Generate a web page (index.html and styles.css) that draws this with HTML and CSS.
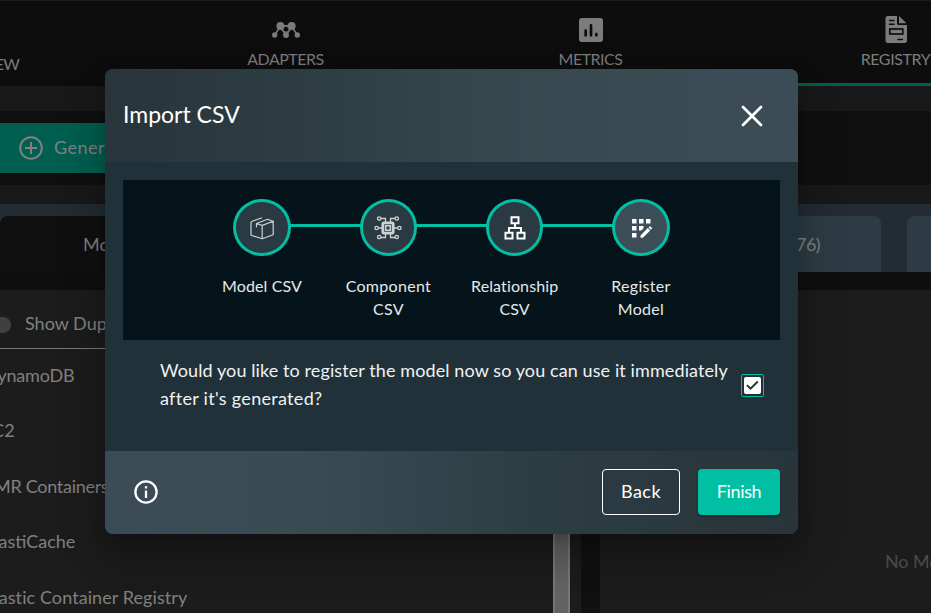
FILE: index.html
```html
<!DOCTYPE html>
<html lang="en">
<head>
<meta charset="utf-8">
<title>Import CSV</title>
<link rel="stylesheet" href="styles.css">
</head>
<body>
<div class="page">
  <nav class="nav">
    <div class="nav-tab nav-tab-first"><span>OVERVIEW</span></div>
    <div class="nav-tab">
      <svg width="28" height="28" viewBox="0 0 28 28"><g fill="currentColor"><circle cx="8.4" cy="10" r="4"/><circle cx="19.6" cy="10" r="4"/><circle cx="2.7" cy="19" r="2.7"/><circle cx="14" cy="19" r="3"/><circle cx="25.3" cy="19" r="2.7"/></g><path d="M2.7 19 8 11M25.3 19 20 11M8 11l6 8 6-8M8 9.8h12" fill="none" stroke="currentColor" stroke-width="1.5"/><circle cx="14" cy="13.2" r="2.8" fill="#0d0d0d" stroke="currentColor" stroke-width=".8"/></svg>
      <span>ADAPTERS</span>
    </div>
    <div class="nav-tab">
      <svg width="32" height="32" viewBox="0 0 24 24"><path fill="currentColor" fill-rule="evenodd" d="M5 3h14a2 2 0 0 1 2 2v14a2 2 0 0 1-2 2H5a2 2 0 0 1-2-2V5c0-1.100.9-2 2-2ZM8 11.500a1 1 0 0 0-1 1V16a1 1 0 0 0 2 0v-3.500a1 1 0 0 0-1-1ZM12 7.500a1 1 0 0 0-1 1V16a1 1 0 0 0 2 0V8.500a1 1 0 0 0-1-1ZM16 14a1 1 0 0 0-1 1v1a1 1 0 0 0 2 0v-1a1 1 0 0 0-1-1Z"/></svg>
      <span>METRICS</span>
    </div>
    <div class="nav-tab nav-tab-active">
      <svg width="22" height="28" viewBox="0 0 22 28"><path fill="currentColor" d="M3 0h9v7.500a1.500 1.500 0 0 0 1.500 1.500H22v15.500a2.500 2.500 0 0 1-2.500 2.500H3A2.500 2.500 0 0 1 .5 24.500v-22A2.500 2.500 0 0 1 3 0ZM14 0l7.500 7.200H14Z"/><path d="M4.500 4.500H9M4.500 8.200H9M13 23.500h4.500" stroke="#0d0d0d" stroke-width="1.500" stroke-linecap="round"/><rect x="4.800" y="13" width="13" height="5" fill="none" stroke="#0d0d0d" stroke-width="1.700"/></svg>
      <span>REGISTRY</span>
    </div>
  </nav>
  <div class="toolbar">
    <button class="generate"><svg width="24" height="24" viewBox="0 0 24 24" fill="none" stroke="currentColor" stroke-width="2"><circle cx="12" cy="12" r="10.800"/><path d="M12 6v12M6 12h12"/></svg><span>Generate</span></button>
  </div>
  <div class="tabs">
    <div class="tab tab-selected">Models</div>
    <div class="tab tab-filled">(76)</div>
    <div class="tab tab-last"></div>
  </div>
  <div class="content">
    <div class="list">
      <div class="toggle-row"><span class="toggle"></span><span class="toggle-label">Show Duplicates</span></div>
      <div class="row dynamo">DynamoDB</div>
      <div class="row ec2">EC2</div>
      <div class="row emr">EMR Containers</div>
      <div class="row">ElastiCache</div>
      <div class="row registry">Elastic Container Registry</div>
    </div>
    <div class="scroll"></div>
    <div class="gap"></div>
    <div class="details">No Model selected</div>
  </div>
</div>

<div class="overlay">
  <section class="modal">
    <header class="modal-head">
      <h1>Import CSV</h1>
      <svg width="24" height="24" viewBox="0 0 24 24" fill="none" stroke="#fff" stroke-width="2.700" stroke-linecap="round"><path d="m3 3 18 18M21 3 3 21"/></svg>
    </header>
    <div class="modal-body">
      <ol class="steps">
        <li>
          <span class="circle"><svg width="26" height="26" viewBox="0 0 26 26" fill="none" stroke="#ccd1d3" stroke-width="1.200" stroke-linejoin="round"><path d="M2 6.800v13.400l11.200 3.600 11-4V6.200l-11 4.200v13.400M2 6.800l11-4M13.200 10.400 7.500 8.500v3.800M7.500 8.500l11-4.200 5.700 1.900"/></svg></span>
          <span class="label">Model CSV</span>
        </li>
        <li>
          <span class="circle"><svg width="28" height="26" viewBox="0 0 28 26" fill="none" stroke="#ccd1d3" stroke-width="1.300"><rect x="8.800" y="7.800" width="10.400" height="10.400" rx="1" stroke-width="2.800"/><rect x="11.700" y="10.700" width="4.600" height="4.600" stroke-width="1.600"/><path d="M11.500 7V3.500H7M16.500 7V3.500H21M11.500 19v3.500H7M16.500 19v3.500H21M8 13H4.300M20 13h3.700"/><circle cx="5.200" cy="3.500" r="1.700"/><circle cx="22.800" cy="3.500" r="1.700"/><circle cx="5.200" cy="22" r="1.700"/><circle cx="22.800" cy="22" r="1.700"/><circle cx="2.600" cy="13" r="1.700"/><circle cx="25.400" cy="13" r="1.700"/></svg></span>
          <span class="label wide">Component<br>CSV</span>
        </li>
        <li>
          <span class="circle"><svg width="24" height="26" viewBox="0 0 24 26" fill="none" stroke="#fff" stroke-width="2"><path d="M8.500 2.300h7v6h-7zM2.500 17.700h7v5.800h-7zM14.500 17.700h7v5.800h-7zM12 8.500V13M6 17.500V13h12v4.500"/></svg></span>
          <span class="label">Relationship<br>CSV</span>
        </li>
        <li>
          <span class="circle circle-current"><svg width="24" height="24" viewBox="0 0 24 24" fill="#fff"><path d="M3 3h4.500v4.500H3zM10 3h4.500v4.500H10zM17 3h4.500v4.500H17zM3 10h4.500v4.500H3zM10 10h4.500v2.300l-2.200 2.200H10zM3 17h4.500v4.500H3zM11.500 19.400l7.300-7.300 2.400 2.400-7.300 7.300h-2.400zM19.500 11.400l1-1q.5-.5 1 0l1.300 1.300q.5.500 0 1l-1 1z"/></svg></span>
          <span class="label wide">Register<br>Model</span>
        </li>
      </ol>
      <div class="question">
        <p>Would you like to register the model now so you can use it immediately<br><span class="second">after it's generated?</span></p>
        <span class="check"><svg width="17" height="17" viewBox="0 0 17 17"><rect width="17" height="17" rx="2" fill="#fff"/><path d="m3 8.200 3.500 3.500L13.800 4.500" fill="none" stroke="#20313a" stroke-width="1.900"/></svg></span>
      </div>
    </div>
    <footer class="modal-foot">
      <svg class="info" width="24" height="24" viewBox="0 0 24 24" fill="none" stroke="#fff" stroke-width="2.300"><circle cx="12" cy="12" r="10.600"/><path d="M12 10.500V18M12 6.200v2.200"/></svg>
      <button class="btn back">Back</button>
      <button class="btn finish">Finish</button>
    </footer>
  </section>
</div>
</body>
</html>
```
FILE: styles.css
```css
* { box-sizing: border-box; }
body { margin: 0; height: 613px; overflow: hidden; background: #1c1c1c; color: #808080; font: 18px/24px "Lato", sans-serif; }
button { font: inherit; color: inherit; border: 0; }
svg { display: block; flex: none; }
.page { width: 931px; height: 613px; overflow: hidden; background: #191919; }

.nav { display: flex; height: 86px; border-top: 1px solid #1c1c1c; background: #0d0d0d; margin-left: -172px; width: 1220px; }
.nav-tab { width: 305px; padding-bottom: 15px; display: flex; flex-direction: column; align-items: center; justify-content: flex-end; font-size: 16px; letter-spacing: -.5px; color: #7c7c7c; }
.nav-tab:nth-child(2) svg { margin-bottom: 3px; }
.nav-tab:nth-child(3) svg { margin-bottom: 1px; }
.nav-tab:nth-child(4) svg { margin-bottom: 3px; }
.nav-tab-first { padding: 0 0 10px; letter-spacing: -.8px; }
.nav-tab-active { border-bottom: 3px solid #00604f; padding-bottom: 12px; letter-spacing: -.4px; }

.toolbar { height: 74px; margin-top: 25px; padding-top: 12px; background: #101010; }
.generate { display: flex; align-items: center; gap: 11px; width: 150px; height: 50px; margin: 0; padding: 0 19px; background: #005f50; letter-spacing: .5px; }
.generate span { padding-bottom: 2px; }

.tabs { display: flex; height: 68px; margin-top: 19px; padding-top: 12px; background: #222c32; }
.tab { height: 56px; line-height: 57px; }
.tab-selected { width: 300px; padding-left: 83px; background: #101010; border-radius: 8px 8px 0 0; }
.tab-filled { width: 581px; padding-right: 61px; text-align: right; background: #2d3c44; border-radius: 0 8px 0 0; letter-spacing: -.6px; }
.tab-last { flex: 1; margin-left: 26px; background: #2d3c44; border-radius: 8px 0 0 0; }

.content { display: flex; height: 341px; border-top: 18px solid #0f0f0f; background: #1c1c1c; }
.list { width: 553px; white-space: nowrap; }
.toggle-row { display: flex; align-items: center; gap: 14px; height: 59px; padding-top: 11px; border-bottom: 1px solid #777; }
.toggle { width: 31px; height: 16px; margin-left: -20px; border-radius: 8px; background: #404040; }
.toggle-label { padding-bottom: 3px; }
.row { height: 55.4px; margin-left: -16px; line-height: 53px; }
.dynamo { letter-spacing: -.2px; }
.ec2 { margin-left: -18px; }
.emr { letter-spacing: -.3px; }
.registry { letter-spacing: .08px; }
.scroll { width: 17px; border: solid #777; border-width: 0 2px; background: #626262; }
.gap { width: 19px; margin-left: 11px; background: #111; }
.details { flex: 1; padding: 259px 0 0 285px; white-space: nowrap; overflow: hidden; color: #4b4b4b; letter-spacing: -.1px; }

.overlay { position: absolute; inset: 0; padding: 69px 0 0 105px; }
.modal { width: 693px; height: 465px; border-radius: 8px; overflow: hidden; background: #20313a; color: #fff; box-shadow: 0 11px 15px -7px rgba(0,0,0,.2), 0 24px 38px 3px rgba(0,0,0,.14), 0 9px 46px 8px rgba(0,0,0,.12); }
.modal-head { display: flex; align-items: center; justify-content: space-between; height: 93px; padding: 0 34.5px 0 18px; background: linear-gradient(90deg, #28353a, #2f3f46 35%, #36474e 55%, #3c4c56 90%); }
.modal-head h1 { margin: 0; padding-bottom: 3px; font-size: 23px; line-height: 30px; font-weight: 400; }
.modal-body { height: 289px; padding: 18px; }
.steps { display: grid; grid-template-columns: repeat(4, 126.3px); justify-content: center; height: 160px; margin: 0; padding: 19px 0 0; list-style: none; background: #05141b; }
.steps li { display: flex; flex-direction: column; align-items: center; position: relative; }
.steps li + li::before { content: ""; position: absolute; top: 25px; left: -36px; width: 72px; height: 3px; background: #00bfa2; }
.circle { display: flex; align-items: center; justify-content: center; width: 57.5px; height: 57px; border: 3px solid #00bfa2; border-radius: 50%; background: #293a43; }
.circle-current { background: #3c4f58; }
.label { margin-top: 18px; font-size: 16px; line-height: 23px; letter-spacing: .12px; text-align: center; color: #e6e8e9; }
.wide { letter-spacing: .3px; }
.question { display: flex; align-items: center; gap: 13px; padding: 16px 0 0 37px; }
.question p { width: 568px; margin: 0; line-height: 28px; letter-spacing: .1px; white-space: nowrap; color: #f0f2f3; }
.second { letter-spacing: .3px; }
.check { display: flex; align-items: center; justify-content: center; width: 23px; height: 23px; margin-top: 3px; border: 1px solid #00bfa2; border-radius: 2px; }
.modal-foot { display: flex; align-items: center; height: 83px; padding: 0 18px 2px 29px; background: linear-gradient(90deg, #3c4c56, #384b53 30%, #2d3d44 62%, #28353a); }
.info { margin-right: auto; }
.btn { height: 46px; padding: 0 0 2px; border-radius: 4px; }
.back { width: 78px; margin-right: 18px; border: 1px solid #fff; background: transparent; letter-spacing: .5px; }
.finish { width: 82px; background: #00bfa2; letter-spacing: -.35px; box-shadow: 0 2px 3px rgba(0,0,0,.25); }
```
